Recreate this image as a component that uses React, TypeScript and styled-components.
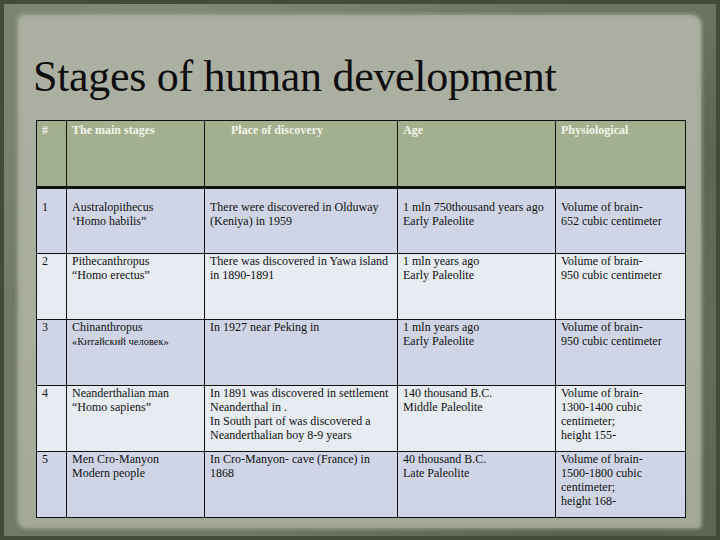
import React from 'react'
import styled, { createGlobalStyle } from 'styled-components'

const GlobalStyle = createGlobalStyle`
  html, body {
    margin: 0;
    padding: 0;
    background: #4a5240;
  }
`

const Page = styled.div`
  box-sizing: border-box;
  width: 720px;
  height: 540px;
  padding: 11px 16px 8px 14px;
  border: 4px solid #434b39;
  background:
    radial-gradient(ellipse at 20% 10%, rgba(150, 156, 138, 0.55), transparent 40%),
    radial-gradient(ellipse at 85% 95%, rgba(60, 68, 52, 0.5), transparent 45%),
    radial-gradient(ellipse at 95% 30%, rgba(70, 78, 60, 0.5), transparent 40%),
    #717a65;
  display: flex;
`

const Paper = styled.div`
  flex: 1;
  display: flex;
  flex-direction: column;
  padding: 40px 15px 12px 18px;
  background: linear-gradient(180deg, #acb0a2 0%, #a9ad9e 60%, #a3a898 100%);
  border-radius: 6px 10px 4px 8px;
  box-shadow:
    0 0 3px 2px rgba(160, 166, 148, 0.6),
    inset 0 0 4px rgba(120, 126, 110, 0.5);
`

const Title = styled.h1`
  margin: 0 0 21px -3px;
  font-family: 'Liberation Serif', 'DejaVu Serif', serif;
  font-weight: normal;
  font-size: 44px;
  line-height: 44px;
  letter-spacing: -0.3px;
  color: #0c0c0c;
`

const Grid = styled.table`
  width: 649px;
  border-collapse: collapse;
  table-layout: fixed;
  font-family: 'Liberation Serif', serif;
  font-size: 12px;
  line-height: 14px;
  color: #111;
`

const HeadCell = styled.th<{ $indent?: number }>`
  height: 63px;
  padding: 2px 4px 0 ${(p) => 5 + (p.$indent ?? 0)}px;
  background: #a2b08f;
  border: 1px solid #111;
  border-bottom: 3px solid #111;
  text-align: left;
  vertical-align: top;
  font-weight: bold;
  color: #f3f4ea;
`

const Row = styled.tr<{ $shade: 'dark' | 'light'; $first?: boolean }>`
  height: 66px;
  background: ${(p) => (p.$shade === 'dark' ? '#cfd5e6' : '#e7ebf2')};

  td {
    padding-top: ${(p) => (p.$first ? 11 : 0)}px;
  }
`

const Cell = styled.td`
  box-sizing: border-box;
  padding: 0 4px 0 5px;
  border: 1px solid #111;
  vertical-align: top;
  white-space: pre-line;
`

interface Stage {
  num: string
  stage: string
  place: string
  age: string
  phys: string
}

const stages: Stage[] = [
  {
    num: '1',
    stage: 'Australopithecus\n‘Homo habilis”',
    place: 'There were discovered in Olduway\n(Keniya) in 1959',
    age: '1 mln 750thousand years ago\nEarly Paleolite',
    phys: 'Volume of brain-\n652 cubic centimeter',
  },
  {
    num: '2',
    stage: 'Pithecanthropus\n“Homo erectus”',
    place: 'There was discovered in Yawa island\nin 1890-1891',
    age: '1 mln years ago\nEarly Paleolite',
    phys: 'Volume of brain-\n950 cubic centimeter',
  },
  {
    num: '3',
    stage: 'Chinanthropus\n«Китайский человек»',
    place: 'In 1927 near Peking in',
    age: '1 mln years ago\nEarly Paleolite',
    phys: 'Volume of brain-\n950 cubic centimeter',
  },
  {
    num: '4',
    stage: 'Neanderthalian man\n“Homo sapiens”',
    place:
      'In 1891 was discovered in settlement\nNeanderthal in .\nIn South part of was discovered a\nNeanderthalian boy 8-9 years',
    age: '140 thousand B.C.\nMiddle Paleolite',
    phys: 'Volume of brain-\n1300-1400 cubic\ncentimeter;\nheight 155-',
  },
  {
    num: '5',
    stage: 'Men Cro-Manyon\nModern people',
    place: 'In Cro-Manyon- cave (France) in\n1868',
    age: '40 thousand B.C.\nLate Paleolite',
    phys: 'Volume of brain-\n1500-1800 cubic\ncentimeter;\nheight 168-',
  },
]

const Small = styled.span`
  font-size: 10.5px;
`

export default function App() {
  return (
    <>
      <GlobalStyle />
      <Page>
        <Paper>
          <Title>Stages of human development</Title>
          <Grid>
            <colgroup>
              <col style={{ width: 30 }} />
              <col style={{ width: 138 }} />
              <col style={{ width: 193 }} />
              <col style={{ width: 158 }} />
              <col style={{ width: 130 }} />
            </colgroup>
            <thead>
              <tr>
                <HeadCell>#</HeadCell>
                <HeadCell>The main stages</HeadCell>
                <HeadCell $indent={21}>Place of discovery</HeadCell>
                <HeadCell>Age</HeadCell>
                <HeadCell>Physiological</HeadCell>
              </tr>
            </thead>
            <tbody>
              {stages.map((s, i) => (
                <Row key={s.num} $shade={i % 2 === 0 ? 'dark' : 'light'} $first={i === 0}>
                  <Cell>{s.num}</Cell>
                  <Cell>
                    {s.num === '3' ? (
                      <>
                        Chinanthropus
                        {'\n'}
                        <Small>«Китайский человек»</Small>
                      </>
                    ) : (
                      s.stage
                    )}
                  </Cell>
                  <Cell>{s.place}</Cell>
                  <Cell>{s.age}</Cell>
                  <Cell>{s.phys}</Cell>
                </Row>
              ))}
            </tbody>
          </Grid>
        </Paper>
      </Page>
    </>
  )
}
